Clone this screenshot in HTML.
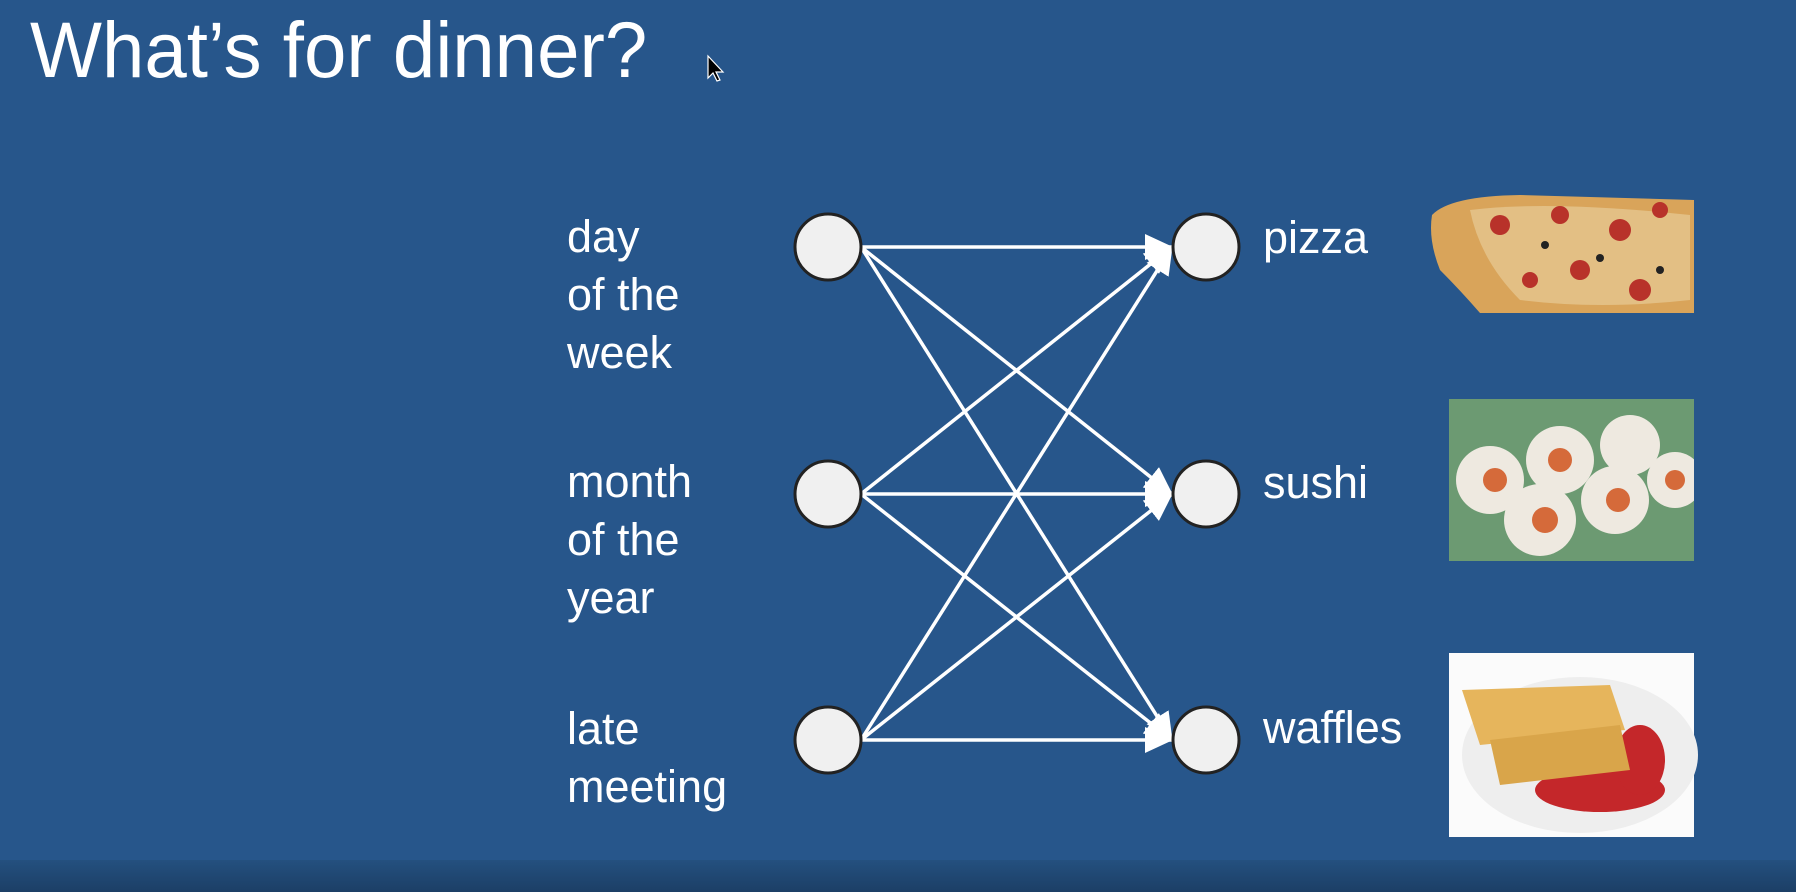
<!DOCTYPE html>
<html><head><style>
body{margin:0;width:1796px;height:892px;overflow:hidden;background:#27568b;font-family:"Liberation Sans",sans-serif;color:#fff;position:relative}
.t{position:absolute;white-space:nowrap;line-height:1}
.l{position:absolute;font-size:45px;line-height:58px;left:567px}
.r{position:absolute;font-size:45px;left:1263px;line-height:1}
</style></head><body>
<div class="t" style="left:30px;top:10px;font-size:79px;transform:scaleX(0.965);transform-origin:0 0">What’s for dinner?</div>
<div class="l" style="top:208px">day<br>of the<br>week</div>
<div class="l" style="top:453px">month<br>of the<br>year</div>
<div class="l" style="top:700px">late<br>meeting</div>
<div class="r" style="top:215px">pizza</div>
<div class="r" style="top:460px">sushi</div>
<div class="r" style="top:705px">waffles</div>
<svg width="1796" height="892" style="position:absolute;left:0;top:0">
<defs><clipPath id="cs"><rect x="1449" y="399" width="245" height="162"/></clipPath>
<marker id="b" markerWidth="28" markerHeight="26" refX="27" refY="13" orient="auto" markerUnits="userSpaceOnUse"><path d="M0,0L28,13L0,26z" fill="#fff"/></marker></defs>
<g stroke="#fff" stroke-width="3.5" marker-end="url(#b)">
<line x1="861" y1="247" x2="1172" y2="247"/><line x1="861" y1="247" x2="1172" y2="494"/><line x1="861" y1="247" x2="1172" y2="740"/>
<line x1="861" y1="494" x2="1172" y2="247"/><line x1="861" y1="494" x2="1172" y2="494"/><line x1="861" y1="494" x2="1172" y2="740"/>
<line x1="861" y1="740" x2="1172" y2="247"/><line x1="861" y1="740" x2="1172" y2="494"/><line x1="861" y1="740" x2="1172" y2="740"/>
</g>
<g fill="#f0f0f0" stroke="#222" stroke-width="3">
<ellipse cx="828" cy="247" rx="33" ry="33"/><ellipse cx="828" cy="494" rx="33" ry="33"/><ellipse cx="828" cy="740" rx="33" ry="33"/>
<ellipse cx="1206" cy="247" rx="33" ry="33"/><ellipse cx="1206" cy="494" rx="33" ry="33"/><ellipse cx="1206" cy="740" rx="33" ry="33"/>
</g>
<path d="M708,56 L708,78 L713,73 L717,81 L720,80 L716,72 L723,72z" fill="#000" stroke="#fff" stroke-width="1.2"/>
<path d="M1432,215 Q1450,196 1520,195 L1694,200 L1694,313 L1480,313 Q1460,290 1440,270 Q1428,240 1432,215z" fill="#d9a45a"/>
<path d="M1470,210 Q1550,200 1690,215 L1690,300 Q1600,310 1520,300 Q1480,260 1470,210z" fill="#e9d2a0" opacity="0.6"/>
<g fill="#b8322a"><circle cx="1500" cy="225" r="10"/><circle cx="1560" cy="215" r="9"/><circle cx="1620" cy="230" r="11"/><circle cx="1660" cy="210" r="8"/><circle cx="1580" cy="270" r="10"/><circle cx="1640" cy="290" r="11"/><circle cx="1530" cy="280" r="8"/></g>
<g fill="#222"><circle cx="1545" cy="245" r="4"/><circle cx="1600" cy="258" r="4"/><circle cx="1660" cy="270" r="4"/></g>
<g clip-path="url(#cs)">
<rect x="1449" y="399" width="245" height="162" fill="#6c9a72"/>
<g fill="#eee9e0"><circle cx="1490" cy="480" r="34"/><circle cx="1560" cy="460" r="34"/><circle cx="1630" cy="445" r="30"/><circle cx="1540" cy="520" r="36"/><circle cx="1615" cy="500" r="34"/><circle cx="1675" cy="480" r="28"/></g>
<g fill="#d56a3a"><circle cx="1495" cy="480" r="12"/><circle cx="1560" cy="460" r="12"/><circle cx="1545" cy="520" r="13"/><circle cx="1618" cy="500" r="12"/><circle cx="1675" cy="480" r="10"/></g>
</g>
<rect x="1449" y="653" width="245" height="184" fill="#fbfbfb"/>
<ellipse cx="1580" cy="755" rx="118" ry="78" fill="#eee"/>
<g fill="#c4272a"><ellipse cx="1600" cy="790" rx="65" ry="22"/><ellipse cx="1640" cy="760" rx="25" ry="35"/></g>
<path d="M1462,690 L1610,685 L1625,730 L1480,745z" fill="#e6b55c"/>
<path d="M1490,740 L1620,725 L1630,770 L1500,785z" fill="#d9a54a"/>
</svg>
<div style="position:absolute;left:0;top:860px;width:1796px;height:32px;background:linear-gradient(#24507f,#1c3f66)"></div>
</body></html>
